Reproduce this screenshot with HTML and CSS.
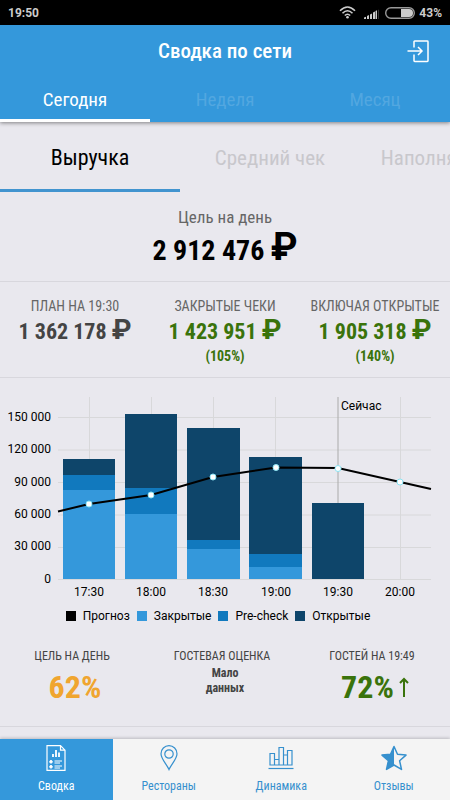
FILE: index.html
```
<!DOCTYPE html>
<html lang="ru">
<head>
<meta charset="utf-8">
<meta name="viewport" content="width=device-width, initial-scale=1">
<title>Сводка по сети</title>
<link rel="stylesheet" href="styles.css">
</head>
<body>
<div class="statusbar">
  <span class="clock">19:50</span>
  <svg class="wifi" viewBox="0 0 17 13" width="17" height="13" aria-hidden="true"><g fill="none" stroke="#ccc" stroke-width="1.6"><path d="M1 4.8Q8.500-2.800 16 4.800"/><path d="M3.500 7.200Q8.500 2.200 13.500 7.200"/><path d="M5.800 9.500Q8.500 7 11.200 9.500"/></g><circle cx="8.500" cy="11.300" r="1.300" fill="#ccc"/></svg>
  <svg class="signal" viewBox="0 0 15 10" width="15" height="10" aria-hidden="true"><path d="M0 10V8.500l2-.8V10zM3 10V7l2-1v4zM6 10V5.500l2-1V10zM9 10V3.500l2-1V10zM11.500 10V2l1.500-.7V10z" fill="#ccc"/><path d="M14 10V1l1-.5V10z" fill="#333"/></svg>
  <svg class="battery" viewBox="0 0 30 12" width="30" height="12" aria-hidden="true"><rect x=".7" y=".7" width="28.600" height="10.600" rx="5.300" fill="none" stroke="#999" stroke-width="1.400"/><path d="M16 2h8a4 4 0 0 1 0 8h-8z" fill="#ccc"/></svg>
  <span>43%</span>
</div>
<header class="header">
  <div class="titlebar">
    <h1 class="title">Сводка по сети</h1>
    <button class="exit" type="button" aria-label="Выйти"><svg viewBox="0 0 23 23" width="23" height="23" fill="none" stroke="#fff" stroke-width="1.500" aria-hidden="true"><path d="M7 7.500V1.700Q7 1 7.700 1H20.300Q21 1 21 1.700V20.800Q21 21.500 20.300 21.500H7.700Q7 21.500 7 20.800V14.500M.5 11H15M11 7l4 4-4 4"/></svg></button>
  </div>
  <nav class="tabs">
    <a class="tab tab-active" href="#">Сегодня</a>
    <a class="tab" href="#">Неделя</a>
    <a class="tab" href="#">Месяц</a>
  </nav>
</header>
<main>
  <nav class="metrics">
    <a class="metric metric-active" href="#">Выручка</a>
    <a class="metric" href="#">Средний чек</a>
    <a class="metric" href="#">Наполняемость</a>
  </nav>
  <section class="goal">
    <div class="goal-label">Цель на день</div>
    <div class="goal-value">2 912 476 <span class="ruble">₽</span></div>
  </section>
  <section class="totals">
    <div class="total">
      <div class="total-label">ПЛАН НА 19:30</div>
      <div class="total-value">1 362 178 <span class="ruble">₽</span></div>
    </div>
    <div class="total total-good">
      <div class="total-label">ЗАКРЫТЫЕ ЧЕКИ</div>
      <div class="total-value">1 423 951 <span class="ruble">₽</span></div>
      <div class="total-share">(105%)</div>
    </div>
    <div class="total total-good">
      <div class="total-label">ВКЛЮЧАЯ ОТКРЫТЫЕ</div>
      <div class="total-value">1 905 318 <span class="ruble">₽</span></div>
      <div class="total-share">(140%)</div>
    </div>
  </section>
  <section class="summary">
    <svg class="chart" viewBox="0 0 450 228" role="img" aria-label="Выручка по времени">
      <g class="grid">
        <path d="M58 39.500H431M58 72H431M58 104.500H431M58 137H431M58 169.500H431M58 201.500H431"/>
        <path d="M89.500 19V201M151.500 19V201M213.500 19V201M275.500 19V201M400.500 19V201"/>
      </g>
      <path class="now" d="M338 19V201"/>
      <g class="open">
        <rect x="63" y="81" width="52" height="16"/><rect x="125" y="36" width="52" height="74"/><rect x="187" y="50" width="53" height="112"/><rect x="249" y="79" width="53" height="97"/><rect x="312" y="125" width="52" height="76"/>
      </g>
      <g class="precheck">
        <rect x="63" y="97" width="52" height="15"/><rect x="125" y="110" width="52" height="26"/><rect x="187" y="162" width="53" height="9"/><rect x="249" y="176" width="53" height="13"/>
      </g>
      <g class="closed">
        <rect x="63" y="112" width="52" height="89"/><rect x="125" y="136" width="52" height="65"/><rect x="187" y="171" width="53" height="30"/><rect x="249" y="189" width="53" height="12"/>
      </g>
      <polyline class="forecast" points="58,133.500 89,126 151,117 213,99 276,89.500 338,90 400,104 431,111"/>
      <g class="points">
        <circle cx="89" cy="126" r="3"/><circle cx="151" cy="117" r="3"/><circle cx="213" cy="99" r="3"/><circle cx="276" cy="89.500" r="3"/><circle cx="338" cy="90.500" r="3"/><circle cx="400" cy="104" r="3"/>
      </g>
      <g class="axis-y">
        <text x="51" y="43">150 000</text><text x="51" y="75">120 000</text><text x="51" y="108">90 000</text><text x="51" y="140">60 000</text><text x="51" y="172">30 000</text><text x="51" y="205">0</text>
      </g>
      <g class="axis-x">
        <text x="89" y="218">17:30</text><text x="151" y="218">18:00</text><text x="213" y="218">18:30</text><text x="276" y="218">19:00</text><text x="338" y="218">19:30</text><text x="400" y="218">20:00</text>
      </g>
      <text x="341" y="32">Сейчас</text>
    </svg>
    <ul class="legend">
      <li class="key key-forecast">Прогноз</li>
      <li class="key key-closed">Закрытые</li>
      <li class="key key-precheck">Pre-check</li>
      <li class="key key-open">Открытые</li>
    </ul>
    <div class="stats">
      <div class="stat"><div class="stat-label">ЦЕЛЬ НА ДЕНЬ</div><div class="stat-value stat-warn">62%</div></div>
      <div class="stat"><div class="stat-label">ГОСТЕВАЯ ОЦЕНКА</div><div class="stat-note">Мало<br>данных</div></div>
      <div class="stat"><div class="stat-label">ГОСТЕЙ НА 19:49</div><div class="stat-value stat-good">72%<svg viewBox="0 0 10 20" width="10" height="20" fill="none" stroke="currentColor" stroke-width="2" aria-hidden="true"><path d="M5 20V2M1 6l4-4 4 4"/></svg></div></div>
    </div>
  </section>
</main>
<nav class="bottom">
  <a class="item item-active" href="#">
    <svg viewBox="0 0 26 26" width="26" height="26" fill="none" stroke="currentColor" aria-hidden="true"><path d="M4 .7H17.500L22 5.200V25.300H4zM17.500 .7V5.200H22" stroke-width="1.200"/><path d="M10 12V9M13 12V5M16 12V7.500" stroke-width="1.800"/><path d="M11.500 16H19M11.500 18H17M11.500 21H19M11.500 23H17"/><circle cx="8" cy="16.800" r="1.300" fill="currentColor"/><circle cx="8" cy="21.800" r="1.300" fill="currentColor"/></svg>
    <span>Сводка</span>
  </a>
  <a class="item" href="#">
    <svg viewBox="0 0 26 26" width="26" height="26" fill="none" stroke="currentColor" stroke-width="1.200" aria-hidden="true"><path d="M13 24.500C11 19.500 5 14 5 8.700a8 8 0 0 1 16 0C21 14 15 19.500 13 24.500z"/><circle cx="13" cy="9" r="4.200"/></svg>
    <span>Рестораны</span>
  </a>
  <a class="item" href="#">
    <svg viewBox="0 0 26 26" width="26" height="26" fill="none" stroke="currentColor" stroke-width="1.200" aria-hidden="true"><path d="M2 20V8.500H6.500V20zM6.500 14.500H11M6.500 20H11M11 20V2.500H15.500V20zM15.500 10H19.500M15.500 20H19.500M19.500 20V5.500H24V20z"/><path d="M.5 23.500H25.500"/></svg>
    <span>Динамика</span>
  </a>
  <a class="item" href="#">
    <svg viewBox="0 0 26 26" width="26" height="26" aria-hidden="true"><path d="M13 1.500l3.500 7.700 8.500.9-6.400 5.700 1.900 8.600L13 20l-7.500 4.400 1.900-8.600L1 10.100l8.500-.9z" fill="none" stroke="currentColor" stroke-width="1.500" stroke-linejoin="round"/><path d="M13 1.500V20l-7.500 4.400 1.900-8.600L1 10.100l8.500-.9z" fill="currentColor"/></svg>
    <span>Отзывы</span>
  </a>
</nav>
</body>
</html>
```
FILE: styles.css
```
* { box-sizing: border-box; }

body {
  margin: 0;
  min-height: 100vh;
  display: flex;
  flex-direction: column;
  background: #e9e8ee;
  color: #000;
  font-family: "Roboto Condensed", "Liberation Sans Narrow", Roboto, sans-serif;
  overflow-x: hidden;
}

a { color: inherit; text-decoration: none; }

.statusbar {
  display: flex;
  align-items: center;
  height: 25px;
  padding: 0 8px;
  background: #000;
  color: #ccc;
  font: 700 12px Roboto, sans-serif;
}
.clock { margin-right: auto; }
.wifi { margin-right: 2px; }
.signal { margin: 2px 6px 0 6px; }
.battery { margin-right: 4px; }

.header {
  position: relative;
  background: #3498db;
  color: #fff;
  box-shadow: 0 1px 4px rgba(0, 0, 0, .45);
}
.titlebar {
  display: grid;
  grid-template-columns: 1fr auto 1fr;
  align-items: center;
  height: 52px;
  padding: 0 20px;
}
.title { grid-column: 2; margin: 0; font-size: 21px; font-weight: 500; }
.exit {
  justify-self: end;
  height: 23px;
  padding: 0;
  border: 0;
  background: none;
}
.exit svg { display: block; }
.tabs { display: grid; grid-template-columns: repeat(3, 1fr); }
.tab {
  height: 45px;
  border-bottom: 3px solid transparent;
  text-align: center;
  font-size: 19px;
  line-height: 46px;
  color: #52a7e0;
}
.tab-active { color: #fff; border-color: #fff; }

main { flex: 1; }

.metrics { display: flex; height: 70px; overflow: hidden; }
.metric {
  flex: 0 0 40%;
  border-bottom: 3px solid transparent;
  text-align: center;
  font-size: 21px;
  line-height: 72px;
  color: #c8c7cc;
}
.metric-active { color: #000; border-color: #4294cf; font-size: 22px; }

.goal {
  height: 89px;
  padding-top: 14px;
  text-align: center;
}
.goal-label { font-size: 17px; line-height: 22px; color: #666; }
.goal-value { font-size: 28px; font-weight: 700; line-height: 38px; }
.ruble { font-family: Roboto, sans-serif; font-size: 28px; line-height: 1; }
.goal-value .ruble { font-size: 38px; }

.totals {
  display: grid;
  grid-template-columns: repeat(3, 1fr);
  height: 96px;
  padding-top: 14px;
  border-top: 1px solid #d8d7dd;
  text-align: center;
  white-space: nowrap;
}
.total { color: #444; }
.total-label { font-size: 14px; line-height: 20px; color: #666; }
.total-value { font-size: 22px; font-weight: 700; line-height: 28px; }
.total-share { font-size: 14px; font-weight: 700; line-height: 20px; }
.total-good { color: #3a730b; }

.summary { border-top: 1px solid #d8d7dd; border-bottom: 1px solid #d8d7dd; }
.chart {
  display: block;
  width: 100%;
  font-family: Roboto, sans-serif;
  font-size: 12px;
}
.grid { stroke: #d8d8da; fill: none; }
.now { stroke: #aaa; }
.open { fill: #0e456a; }
.precheck { fill: #1179be; }
.closed { fill: #3498db; }
.forecast { fill: none; stroke: #000; stroke-width: 2; }
.points { fill: #fff; stroke: #8be4f4; stroke-width: 1; }
.axis-y { text-anchor: end; }
.axis-x { text-anchor: middle; }

.legend {
  display: flex;
  justify-content: center;
  gap: 7px;
  margin: 0;
  padding: 0 14px 0 0;
  list-style: none;
  font: 12px/20px Roboto, sans-serif;
}
.key { display: flex; align-items: center; gap: 7px; }
.key::before { content: ""; width: 10px; height: 10px; background: #000; }
.key-closed::before { background: #3498db; }
.key-precheck::before { background: #1179be; }
.key-open::before { background: #0e456a; }

.stats {
  display: grid;
  grid-template-columns: repeat(3, 1fr);
  height: 100px;
  padding-top: 20px;
  text-align: center;
  color: #444;
}
.stat-label { padding-right: 6px; font-size: 12px; line-height: 20px; }
.stat-value {
  display: flex;
  justify-content: center;
  align-items: center;
  gap: 5px;
  font-size: 32px;
  font-weight: 700;
  line-height: 42px;
}
.stat-warn { color: #f0a52f; }
.stat-good { color: #3a730b; }
.stat-note { font-size: 12px; font-weight: 700; line-height: 15px; }

.bottom {
  display: grid;
  grid-template-columns: repeat(4, 1fr);
  height: 61px;
  background: #f4f4f4;
  color: #3690ce;
  box-shadow: 0 -1px 3px rgba(0, 0, 0, .2);
}
.item {
  display: flex;
  flex-direction: column;
  align-items: center;
  gap: 7px;
  padding-top: 6px;
  font-size: 12px;
  line-height: 16px;
}
.item-active { background: #3498db; color: #fff; }
```
